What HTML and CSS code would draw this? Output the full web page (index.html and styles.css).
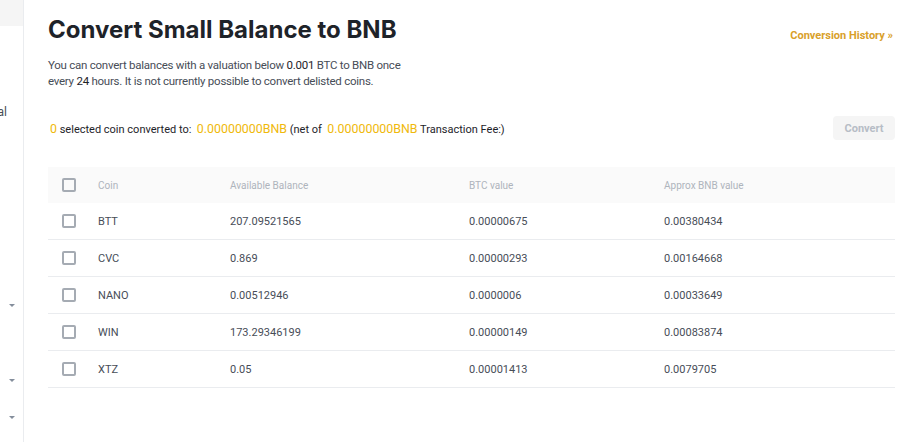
FILE: index.html
```html
<!DOCTYPE html>
<html lang="en">

<head>
  <meta charset="UTF-8">
  <meta name="viewport" content="width=device-width, initial-scale=1.0">
  <title>Convert Small Balance to BNB</title>
  <link rel="stylesheet" href="styles.css">
</head>

<body>
  <div class="page">
    <aside class="sidebar">
      <div class="side-top"></div>
      <div class="side-item">Withdrawal</div>
      <div class="side-caret caret-1"><span class="caret"></span></div>
      <div class="side-caret caret-2"><span class="caret"></span></div>
      <div class="side-caret caret-3"><span class="caret"></span></div>
    </aside>

    <main class="main">
      <div class="header">
        <h1>Convert Small Balance to BNB</h1>
        <a class="history" href="#">Conversion History &raquo;</a>
      </div>
      <p class="desc">You can convert balances with a valuation below <b>0.001</b> BTC to BNB once every <b>24</b> hours. It is not currently possible to convert delisted coins.</p>

      <div class="summary">
        <p><span class="hl">0</span> selected coin converted to: &nbsp;<span class="hl">0.00000000BNB</span> (net of &nbsp;<span class="hl">0.00000000BNB</span> Transaction Fee:)</p>
        <button class="btn" disabled>Convert</button>
      </div>

      <div class="table">
        <div class="row head">
          <span class="check"></span>
          <span>Coin</span>
          <span>Available Balance</span>
          <span>BTC value</span>
          <span>Approx BNB value</span>
        </div>
        <div class="row">
          <span class="check"></span>
          <span>BTT</span>
          <span>207.09521565</span>
          <span>0.00000675</span>
          <span>0.00380434</span>
        </div>
        <div class="row">
          <span class="check"></span>
          <span>CVC</span>
          <span>0.869</span>
          <span>0.00000293</span>
          <span>0.00164668</span>
        </div>
        <div class="row">
          <span class="check"></span>
          <span>NANO</span>
          <span>0.00512946</span>
          <span>0.0000006</span>
          <span>0.00033649</span>
        </div>
        <div class="row">
          <span class="check"></span>
          <span>WIN</span>
          <span>173.29346199</span>
          <span>0.00000149</span>
          <span>0.00083874</span>
        </div>
        <div class="row">
          <span class="check"></span>
          <span>XTZ</span>
          <span>0.05</span>
          <span>0.00001413</span>
          <span>0.0079705</span>
        </div>
      </div>
    </main>
  </div>
</body>

</html>
```

FILE: styles.css
```css
body {
  margin: 0;
  font-family: Roboto, "Liberation Sans", Arial, sans-serif;
  color: #474d57;
  background: #fff;
}

.page {
  display: flex;
  min-height: 442px;
}

/* sidebar, cut off at the left edge */
.sidebar {
  width: 23px;
  flex-shrink: 0;
  border-right: 1px solid #eaecef;
  overflow: hidden;
}

.side-top {
  height: 26px;
  background: #f5f5f5;
}

.side-item {
  display: flex;
  justify-content: flex-end;
  white-space: nowrap;
  padding-right: 16px;
  margin-top: 78px;
  font-size: 12px;
  line-height: 16px;
}

.side-caret {
  display: flex;
  justify-content: flex-end;
  padding-right: 8px;
  height: 6px;
}

.caret-1 { margin-top: 184px; }
.caret-2 { margin-top: 69px; }
.caret-3 { margin-top: 31px; }

.caret {
  width: 0;
  height: 0;
  border-left: 3px solid transparent;
  border-right: 3px solid transparent;
  border-top: 3px solid #848e9c;
}

/* content */
.main {
  flex: 1;
  padding: 14px 9px 0 24px;
}

.header {
  display: flex;
  justify-content: space-between;
  align-items: flex-start;
}

h1 {
  margin: 0;
  font-family: Inter, sans-serif;
  font-size: 24px;
  line-height: 32px;
  font-weight: 700;
  color: #1e2329;
}

.history {
  margin-top: 15px;
  margin-right: 2px;
  font-size: 11px;
  font-weight: 700;
  color: #d9a02a;
  text-decoration: none;
}

.desc {
  margin: 11px 0 0;
  max-width: 362px;
  font-size: 11.5px;
  line-height: 16px;
  letter-spacing: -0.25px;
}

.desc b {
  font-weight: 400;
  color: #1e2329;
}

.summary {
  display: flex;
  justify-content: space-between;
  align-items: center;
  margin-top: 27px;
  padding-left: 2px;
}

.summary p {
  margin: 0;
  font-size: 11px;
  color: #1e2329;
}

.hl {
  color: #f0b90b;
  font-size: 12.4px;
}

.btn {
  width: 62px;
  height: 24px;
  border: 0;
  border-radius: 4px;
  background: #f5f5f5;
  color: #b7bdc6;
  font-family: inherit;
  font-size: 11px;
  font-weight: 700;
}

.table {
  margin-top: 27px;
}

.row {
  display: grid;
  grid-template-columns: 36px 132px 239px 195px 1fr;
  align-items: center;
  height: 36px;
  padding-left: 14px;
  border-bottom: 1px solid #eaecef;
  font-size: 11px;
  color: #474d57;
}

.row.head {
  background: #fafafa;
  border-bottom: 0;
  color: #aeb4bc;
  font-size: 10px;
}

.check {
  width: 10px;
  height: 10px;
  border: 2px solid #a5abb3;
  border-radius: 2px;
}
```
